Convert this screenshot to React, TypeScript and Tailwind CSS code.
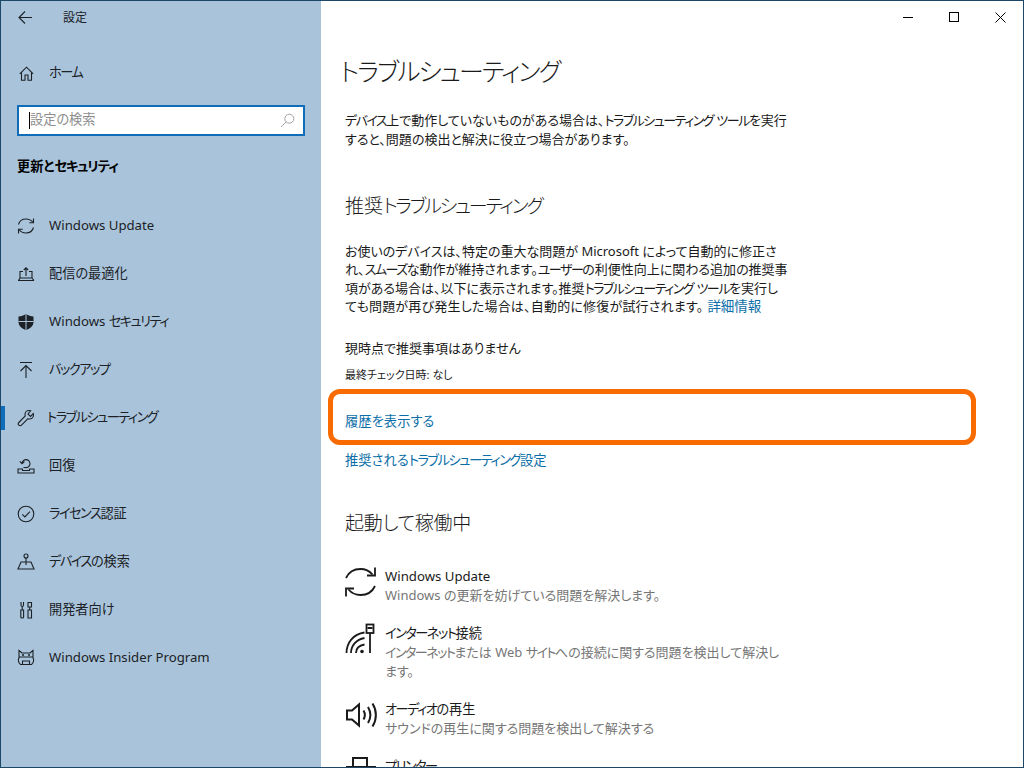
const font = "[font-family:'Noto_Sans','Noto_Sans_CJK_JP',sans-serif] [font-feature-settings:'palt']";

const line = { fill: "none", stroke: "currentColor", strokeWidth: 1.1 };

// katakana runs are much narrower in the original UI font
function K({ children }: { children: React.ReactNode }) {
  return <span className="tracking-[-1.5px]">{children}</span>;
}

function UpdateIcon({ size = 18 }: { size?: number }) {
  return (
    <svg width={size} height={size} viewBox="0 0 18 18" {...line}>
      <path d="M1.5 7.5C2.5 4 5.5 2 9 2c3 0 5.4 1.3 7 3.5" />
      <path d="M16.5 1.5v4.2h-4.2" />
      <path d="M16.5 10.5C15.500 14 12.500 16 9 16c-3 0-5.400-1.300-7-3.500" />
      <path d="M1.500 16.500v-4.200h4.200" />
    </svg>
  );
}

const navItems: { label: React.ReactNode; icon: React.ReactNode; active?: boolean }[] = [
  { label: "Windows Update", icon: <UpdateIcon /> },
  {
    label: "配信の最適化",
    icon: (
      <svg width="18" height="18" viewBox="0 0 18 18" {...line}>
        <path d="M1 15.500h16M1.500 15.500l1.500-2.500V6.500h3M17 15.500L15 13V6.500h-3M3 13h12M9 11V3M6.800 5L9 2.800 11.200 5" />
      </svg>
    ),
  },
  {
    label: <>Windows <K>セキュリティ</K></>,
    icon: (
      <svg width="18" height="18" viewBox="0 0 18 18">
        <path fill="currentColor" d="M9 1c2.400 1.600 4.800 2.300 7.500 2.500V9c0 4-3.500 6.800-7.500 8-4-1.200-7.500-4-7.500-8V3.500C4.200 3.300 6.600 2.600 9 1z" />
        <path d="M9 1v16M1.500 8.500h15" stroke="#a9c4da" strokeWidth="1" />
      </svg>
    ),
  },
  {
    label: <K>バックアップ</K>,
    icon: (
      <svg width="18" height="18" viewBox="0 0 18 18" {...line}>
        <path d="M3 1.500h12M9 17V4.500M3.500 10L9 4.500 14.500 10" />
      </svg>
    ),
  },
  {
    label: <K>トラブルシューティング</K>,
    active: true,
    icon: (
      <svg width="18" height="18" viewBox="0 0 18 18" {...line}>
        <path d="M12 1.500c-2.300 0-4 1.800-4 4 0 .6.100 1.100.3 1.500L1.800 13.500c-.8.800-.8 2 0 2.700.8.800 2 .8 2.700 0L11 9.700c.4.200.9.300 1.500.3 2.200 0 4-1.700 4-4 0-.5-.1-1-.2-1.400L13.500 7.400 11 5l2.700-3.200c-.5-.2-1.100-.3-1.700-.3z" />
      </svg>
    ),
  },
  {
    label: "回復",
    icon: (
      <svg width="18" height="18" viewBox="0 0 18 18" {...line}>
        <path d="M1 12h4.500v1.500h7V12H17v4H1zM5 6.500A4 4 0 1 1 8 10.500h-1.500M2.800 4.300L5 6.700l2.400-2.200" />
      </svg>
    ),
  },
  {
    label: <><K>ライセンス</K>認証</>,
    icon: (
      <svg width="18" height="18" viewBox="0 0 18 18" {...line}>
        <circle cx="9" cy="9" r="7.800" />
        <path d="M5.300 9.300l2.600 2.600 5-5.200" />
      </svg>
    ),
  },
  {
    label: <><K>デバイス</K>の検索</>,
    icon: (
      <svg width="18" height="18" viewBox="0 0 18 18" {...line}>
        <circle cx="9" cy="3" r="2" />
        <path d="M9 5v7M1 16l3-7h10l3 7zM1 16h16" />
      </svg>
    ),
  },
  {
    label: "開発者向け",
    icon: (
      <svg width="18" height="18" viewBox="0 0 18 18" {...line}>
        <path d="M4 1v3c0 1 .6 1.500 1.200 1.500S6.500 5 6.500 4V1M5.200 5.500V9M3.800 9h2.800v7c0 .6-.6 1-1.400 1s-1.400-.4-1.400-1zM11 9h3.500v8H11zM12.700 9V6M11 1.500h3.500V6H11z" />
      </svg>
    ),
  },
  {
    label: "Windows Insider Program",
    icon: (
      <svg width="18" height="18" viewBox="0 0 18 18" {...line}>
        <path d="M2 1.500l3 2.500h8l3-2.500V9c1 .7 1 5-1.500 6.500h-11C1 14 1 9.700 2 9z" />
        <path d="M2 8h14M5 12h8M5.500 15.500V12M12.500 15.500V12" />
        <path d="M5 6h2M11 6h2" strokeWidth="1.600" />
      </svg>
    ),
  },
];

const troubleshooters: { title: React.ReactNode; desc: React.ReactNode; icon: React.ReactNode }[] = [
  {
    title: "Windows Update",
    desc: "Windows の更新を妨げている問題を解決します。",
    icon: (
      <svg width="32" height="32" viewBox="0 0 32 32" fill="none" stroke="currentColor" strokeWidth="1.800">
        <path d="M1 12C4 5.500 9.500 3 15.500 3c4.800 0 9 2 12 5.500" />
        <path d="M30 1.500v8h-8" />
        <path d="M30 20c-3 6.500-8.500 9-14.500 9-4.800 0-9-2-12-5.500" />
        <path d="M1 30.500v-8h8" />
      </svg>
    ),
  },
  {
    title: <><K>インターネット</K>接続</>,
    desc: (
      <>
        <K>インターネット</K>または Web <K>サイト</K>への接続に関する問題を検出して解決し
        <br />
        ます。
      </>
    ),
    icon: (
      <svg width="32" height="32" viewBox="0 0 32 32" fill="none" stroke="currentColor" strokeWidth="1.800">
        <rect x="21.500" y="1.500" width="7" height="8.500" />
        <path d="M22.500 5h5M25 10v20M1.500 30C1.500 20 8 11 19.500 9.500M6 30c0-7 5-13.500 13.500-15M11 30c0-4 3-7.500 8.500-8.500" />
        <circle cx="17" cy="28.500" r="1.800" fill="currentColor" stroke="none" />
      </svg>
    ),
  },
  {
    title: <><K>オーディオ</K>の再生</>,
    desc: "サウンドの再生に関する問題を検出して解決する",
    icon: (
      <svg width="32" height="32" viewBox="0 0 32 32" fill="none" stroke="currentColor" strokeWidth="2">
        <path d="M2 11.500h5L14 5.500v21L7 20.500H2z" />
        <path d="M18.500 11.500c1.700 2.800 1.700 6.200 0 9M23 8c3 5 3 11 0 16M27.500 4.500c4.500 7 4.500 16 0 23" />
      </svg>
    ),
  },
  {
    title: <K>プリンター</K>,
    desc: "",
    icon: (
      <svg width="32" height="32" viewBox="0 0 32 32" fill="none" stroke="currentColor" strokeWidth="2">
        <path d="M8 11V2h14v9M2 11h28v13H2z" />
      </svg>
    ),
  },
];

export default function App() {
  return (
    <div className={`flex h-[768px] w-[1024px] overflow-hidden border border-[#1d4769] bg-white ${font}`}>
      <aside className="flex w-80 shrink-0 flex-col bg-[#a9c4da] text-[#1b2126]">
        <div className="flex h-[33px] items-center pl-[17px] text-xs">
          <svg width="15" height="15" viewBox="0 0 15 15" fill="none" stroke="currentColor" strokeWidth="1.100">
            <path d="M14 7.500H1.500M7 1.500L1 7.500l6 6" />
          </svg>
          <span className="ml-[30px]">設定</span>
        </div>
        <div className="mt-[15px] flex h-12 items-center pl-[18px] text-[13.2px]">
          <svg width="15" height="15" viewBox="0 0 15 15" fill="none" stroke="currentColor" strokeWidth="1.100">
            <path d="M.8 7.800L7.500 1.200l6.700 6.600M2.500 6.500v7.700h3.500V9h3v5.200h3.500V6.500" />
          </svg>
          <span className="ml-[15px]"><K>ホーム</K></span>
        </div>
        <div className="mx-4 mt-2 flex h-[31px] items-center border-2 border-[#0f6cb8] bg-white pl-[10px] pr-[8px] text-[13.2px] text-[#8d8d8d]">
          <span className="h-[17px] w-px bg-black" />
          <span className="-translate-y-px">設定の検索</span>
          <svg className="ml-auto" width="15" height="15" viewBox="0 0 15 15" fill="none" stroke="#a3a3a3" strokeWidth="1">
            <circle cx="9.300" cy="5.700" r="4.500" />
            <path d="M6 9L1 14" />
          </svg>
        </div>
        <h2 className="mt-[20px] pl-[16px] text-[13.2px] font-bold leading-5 text-black">
          更新と<span className="tracking-[-1px]">セキュリティ</span>
        </h2>
        <nav className="mt-[26px] flex flex-col">
          {navItems.map((item, i) => (
            <div key={i} className="relative flex h-12 items-center pl-4 text-[13.2px]">
              {item.active && <span className="absolute left-0 top-[12px] h-6 w-1 bg-[#0f6cb8]" />}
              {item.icon}
              <span className={item.active ? "ml-[12px]" : "ml-[14px]"}>{item.label}</span>
            </div>
          ))}
        </nav>
      </aside>

      <main className="flex min-w-0 flex-1 flex-col text-[#1a1a1a]">
        <div className="flex h-8 shrink-0 justify-end">
          <div className="flex w-[46px] items-center justify-center">
            <span className="h-px w-[10px] bg-black" />
          </div>
          <div className="flex w-[46px] items-center justify-center">
            <span className="h-[10px] w-[10px] border border-black" />
          </div>
          <div className="flex w-[46px] items-center justify-center">
            <svg width="11" height="11" viewBox="0 0 11 11" stroke="#000" strokeWidth="1">
              <path d="M.5.500l10 10M10.500.500l-10 10" />
            </svg>
          </div>
        </div>
        <div className="pl-[24px]">
          <h1 className="-ml-[5px] mt-[18px] text-[25px] font-light leading-[40px] tracking-[-1.9px]">トラブルシューティング</h1>
          <p className="mt-[20px] text-[13px] leading-[19px]">
            <K>デバイス</K>上で動作していないものがある場合は、<K>トラブルシューティング</K> <K>ツール</K>を実行
            <br />
            すると、問題の検出と解決に役立つ場合があります。
          </p>
          <h2 className="mt-[43px] text-[19px] font-light leading-7">
            推奨<span className="tracking-[-2.2px]">トラブルシューティング</span>
          </h2>
          <p className="mt-[22px] text-[13px] leading-[18.33px]">
            お使いのデバイスは、特定の重大な問題が Microsoft によって自動的に修正さ
            <br />
            れ、<K>スムーズ</K>な動作が維持されます。<K>ユーザー</K>の利便性向上に関わる追加の推奨事
            <br />
            項がある場合は、以下に表示されます。推奨<K>トラブルシューティング</K> <K>ツール</K>を実行し
            <br />
            <span className="tracking-[0.2px]">ても問題が再び発生した場合は、自動的に修復が試行されます。</span>
            <a className="ml-1 text-[13.5px] text-[#0b6ea8]">詳細情報</a>
          </p>
          <p className="mt-[23px] text-[13px] leading-5">現時点で推奨事項はありません</p>
          <p className="mt-[7px] text-[11px] leading-5">最終チェック日時: なし</p>
          <div className="relative mt-[23px] h-5">
            <a className="text-[13.3px] leading-5 text-[#0b6ea8]">履歴を表示する</a>
            <span className="absolute -left-[17px] -top-[19px] h-[56px] w-[648px] rounded-[12px] border-[5px] border-[#f96b00]" />
          </div>
          <a className="mt-[22px] block text-[13.3px] leading-5 text-[#0b6ea8]">
            推奨される<K>トラブルシューティング</K>設定
          </a>
          <h2 className="mt-[39px] text-[19px] font-light leading-7 tracking-[-0.3px]">起動して稼働中</h2>
          <div className="mt-[30px] flex flex-col gap-[19px] overflow-hidden">
            {troubleshooters.map((t, i) => (
              <div key={i} className="flex gap-[8px]">
                <div className="-mt-px shrink-0">{t.icon}</div>
                <div className="text-[13.2px] leading-[19px]">
                  <div>{t.title}</div>
                  {t.desc && <div className="text-[13px] text-[#767676]">{t.desc}</div>}
                </div>
              </div>
            ))}
          </div>
        </div>
      </main>
    </div>
  );
}
